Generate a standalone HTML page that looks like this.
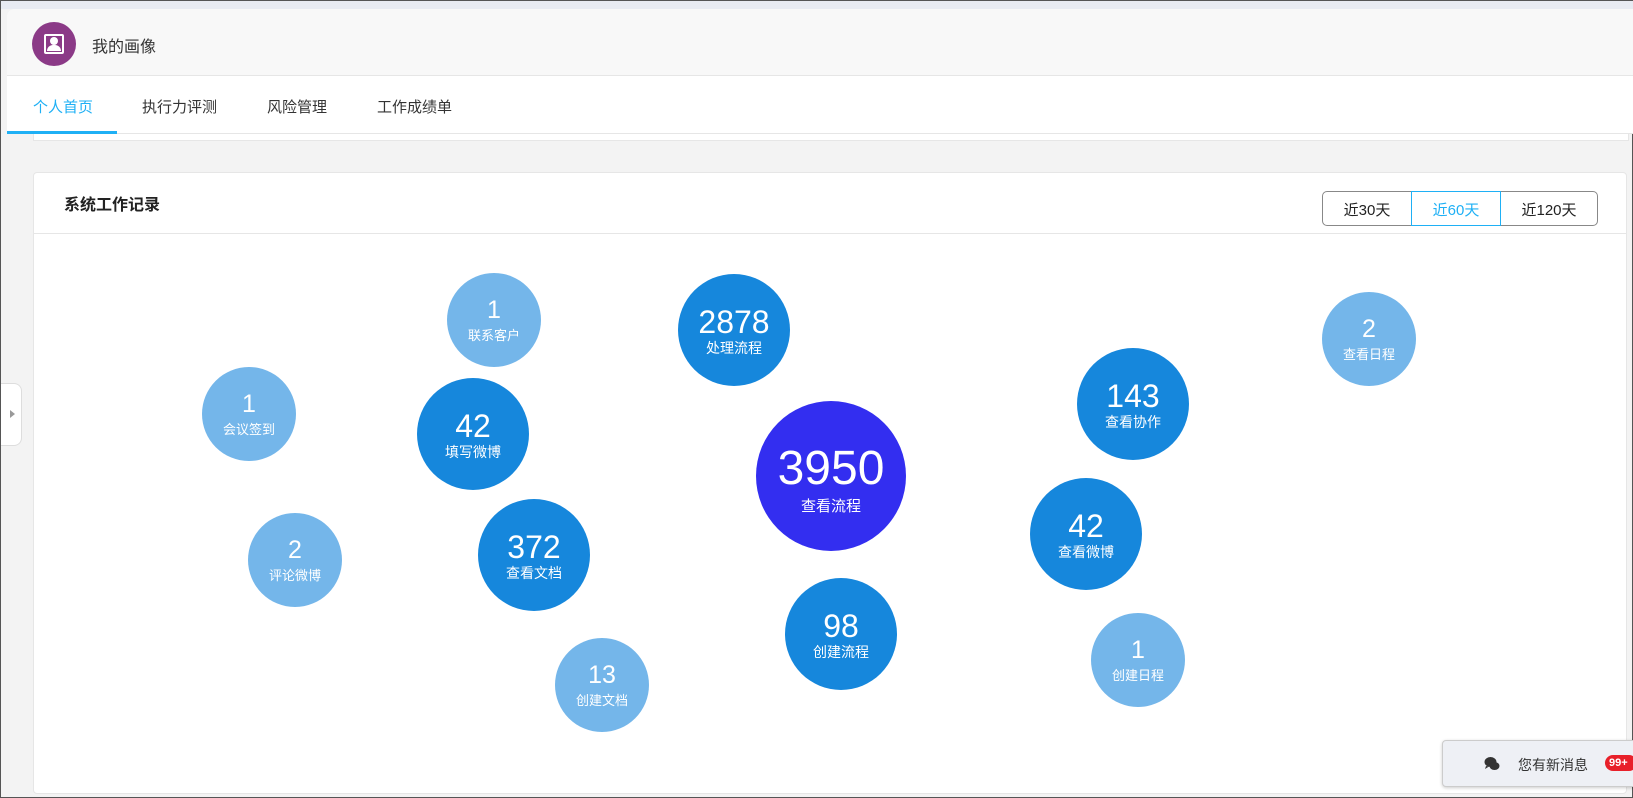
<!DOCTYPE html>
<html><head><meta charset="utf-8"><style>
*{margin:0;padding:0;box-sizing:border-box}
body{width:1633px;height:798px;overflow:hidden;background:#f3f3f3;font-family:"Liberation Sans","Noto Sans CJK SC",sans-serif;position:relative;border:1px solid #555}
.abs{position:absolute}
.b{position:absolute;border-radius:50%;color:#fff;text-align:center}
.b .n{position:absolute;left:0;right:0;line-height:1}
.b .l{position:absolute;left:0;right:0;line-height:1}
.lt{background:#74b6ea}.dk{background:#1687dc}
</style></head><body>
<div class="abs" style="left:0;top:0;width:1633px;height:8px;background:#e8ebf2"></div>
<div class="abs" style="left:6px;top:8px;width:1627px;height:125px;background:#fff;border-radius:8px 0 0 0;border-bottom:1px solid #e6e6e6"></div>
<div class="abs" style="left:6px;top:8px;width:1627px;height:67px;background:#f8f8f8;border-bottom:1px solid #e6e6e6;border-radius:8px 0 0 0"></div>
<div class="abs" style="left:31px;top:21px;width:44px;height:44px;border-radius:50%;background:#8b3a87"></div>
<div class="abs" style="left:43px;top:33px;width:20px;height:20px;border:2px solid #fff;border-radius:2px"></div>
<div class="abs" style="left:49px;top:36px;width:8px;height:8px;border-radius:50%;background:#fff"></div>
<div class="abs" style="left:46px;top:44px;width:14px;height:6px;border-radius:6px 6px 0 0;background:#fff"></div>
<div class="abs" style="left:91px;top:32px;font-size:16px;color:#333">我的画像</div>
<div class="abs" style="left:32px;top:95px;font-size:15px;color:#1fb0f5">个人首页</div>
<div class="abs" style="left:141px;top:95px;font-size:15px;color:#333">执行力评测</div>
<div class="abs" style="left:266px;top:95px;font-size:15px;color:#333">风险管理</div>
<div class="abs" style="left:376px;top:95px;font-size:15px;color:#333">工作成绩单</div>
<div class="abs" style="left:6px;top:130px;width:110px;height:3px;background:#1fb0f5"></div>
<div class="abs" style="left:32px;top:133px;width:1596px;height:7px;background:#fff;border:1px solid #e6e6e6;border-top:none"></div>
<div class="abs" style="left:0;top:382px;width:21px;height:63px;background:#fff;border:1px solid #ddd;border-left:none;border-radius:0 8px 8px 0"></div>
<div class="abs" style="left:9px;top:409px;width:0;height:0;border-left:5px solid #999;border-top:4px solid transparent;border-bottom:4px solid transparent"></div>
<div class="abs" style="left:32px;top:171px;width:1594px;height:622px;background:#fff;border:1px solid #e6e6e6;border-radius:4px"></div>
<div class="abs" style="left:32px;top:232px;width:1594px;height:1px;background:#e6e6e6"></div>
<div class="abs" style="left:63px;top:190px;font-size:16px;font-weight:bold;color:#222">系统工作记录</div>
<div class="abs" style="left:1321px;top:190px;width:276px;height:35px;border:1px solid #888;border-radius:5px;font-size:15px;color:#222">
<span class="abs" style="left:0;width:88px;top:7px;text-align:center">近30天</span>
<span class="abs" style="left:88px;top:-1px;width:90px;height:35px;border:1px solid #1fb0f5;color:#1fb0f5;text-align:center;padding-top:7px">近60天</span>
<span class="abs" style="left:178px;width:96px;top:7px;text-align:center">近120天</span>
</div>

<div class="b lt" style="left:446px;top:272px;width:94px;height:94px"><div class="n" style="top:25px;font-size:25px">1</div><div class="l" style="top:56px;font-size:13px">联系客户</div></div>
<div class="b dk" style="left:677px;top:273px;width:112px;height:112px"><div class="n" style="top:32px;font-size:32px">2878</div><div class="l" style="top:67px;font-size:14px">处理流程</div></div>
<div class="b lt" style="left:1321px;top:291px;width:94px;height:94px"><div class="n" style="top:25px;font-size:25px">2</div><div class="l" style="top:56px;font-size:13px">查看日程</div></div>
<div class="b lt" style="left:201px;top:366px;width:94px;height:94px"><div class="n" style="top:25px;font-size:25px">1</div><div class="l" style="top:56px;font-size:13px">会议签到</div></div>
<div class="b dk" style="left:416px;top:377px;width:112px;height:112px"><div class="n" style="top:32px;font-size:32px">42</div><div class="l" style="top:67px;font-size:14px">填写微博</div></div>
<div class="b" style="left:755px;top:400px;width:150px;height:150px;background:#332ef0"><div class="n" style="top:44px;font-size:48px">3950</div><div class="l" style="top:98px;font-size:15px">查看流程</div></div>
<div class="b dk" style="left:1076px;top:347px;width:112px;height:112px"><div class="n" style="top:32px;font-size:32px">143</div><div class="l" style="top:67px;font-size:14px">查看协作</div></div>
<div class="b dk" style="left:1029px;top:477px;width:112px;height:112px"><div class="n" style="top:32px;font-size:32px">42</div><div class="l" style="top:67px;font-size:14px">查看微博</div></div>
<div class="b lt" style="left:247px;top:512px;width:94px;height:94px"><div class="n" style="top:25px;font-size:25px">2</div><div class="l" style="top:56px;font-size:13px">评论微博</div></div>
<div class="b dk" style="left:477px;top:498px;width:112px;height:112px"><div class="n" style="top:32px;font-size:32px">372</div><div class="l" style="top:67px;font-size:14px">查看文档</div></div>
<div class="b dk" style="left:784px;top:577px;width:112px;height:112px"><div class="n" style="top:32px;font-size:32px">98</div><div class="l" style="top:67px;font-size:14px">创建流程</div></div>
<div class="b lt" style="left:1090px;top:612px;width:94px;height:94px"><div class="n" style="top:25px;font-size:25px">1</div><div class="l" style="top:56px;font-size:13px">创建日程</div></div>
<div class="b lt" style="left:554px;top:637px;width:94px;height:94px"><div class="n" style="top:25px;font-size:25px">13</div><div class="l" style="top:56px;font-size:13px">创建文档</div></div>

<div class="abs" style="left:1441px;top:739px;width:200px;height:47px;background:#eef0f5;border:1px solid #ccc;border-radius:4px;box-shadow:0 1px 3px rgba(0,0,0,.2)"></div>
<svg class="abs" style="left:1483px;top:755px" width="16" height="16" viewBox="0 0 16 16"><ellipse cx="6.5" cy="6" rx="6" ry="5" fill="#333"/><path d="M2 10 L1 13 L5 10.5Z" fill="#333"/><ellipse cx="10.5" cy="10" rx="5" ry="4" fill="#333"/></svg>
<div class="abs" style="left:1517px;top:754px;font-size:14px;color:#333">您有新消息</div>
<div class="abs" style="left:1604px;top:754px;width:32px;height:16px;background:#e8202a;color:#fff;font-size:11px;font-weight:bold;border-radius:8px;padding-left:4px;line-height:16px">99+</div>
</body></html>
